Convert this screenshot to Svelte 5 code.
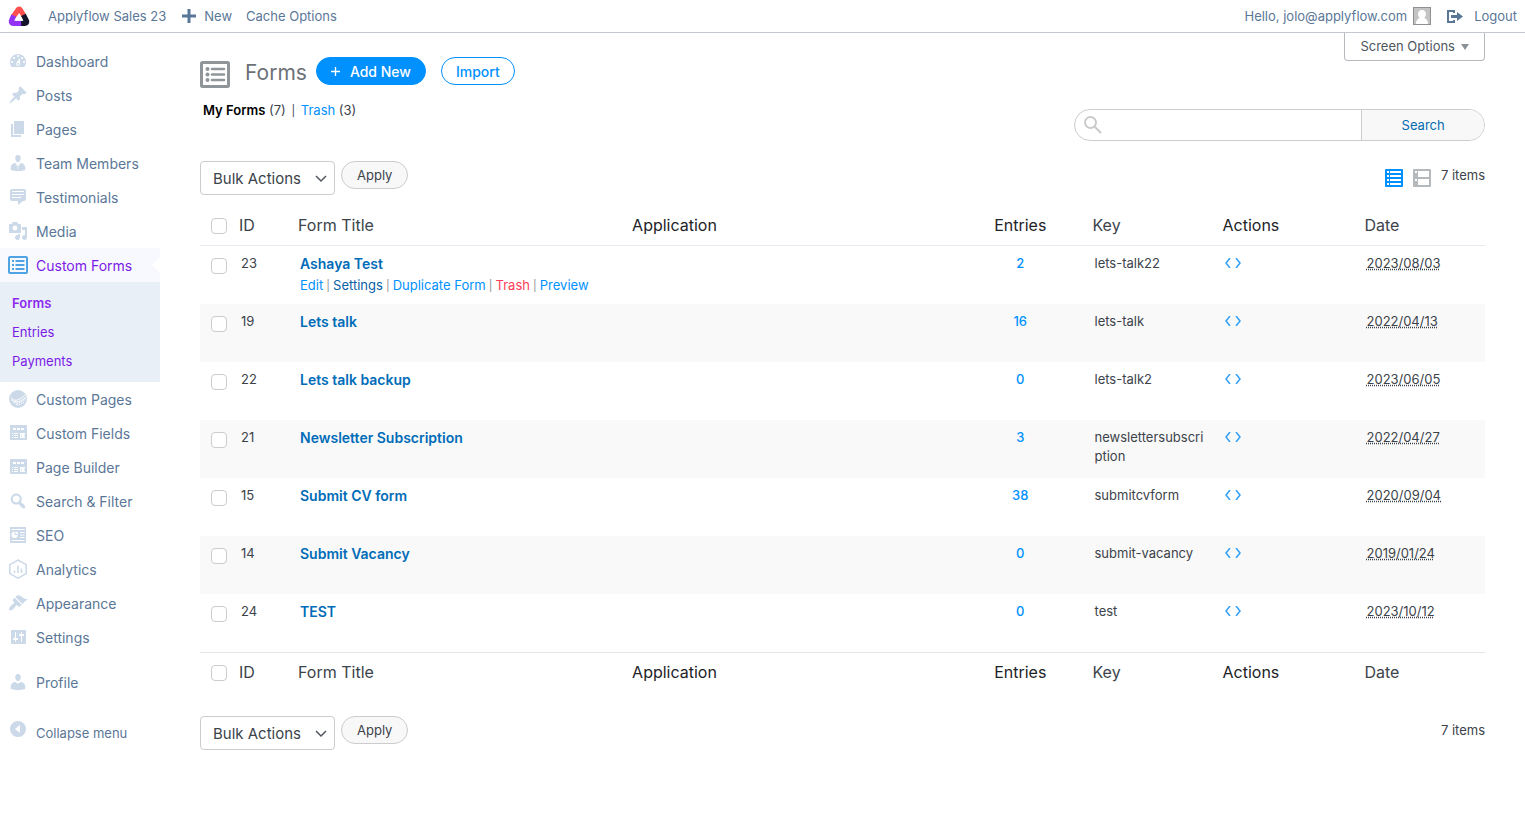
<script lang="ts">
	type MenuItem = { label: string; icon: string; children?: string[]; gap?: boolean };

	const user =
		'<path d="M10 9.25c-2.27 0-2.73-3.44-2.73-3.44C7 4.02 7.82 2 9.97 2c2.16 0 2.98 2.02 2.71 3.81 0 0-.41 3.44-2.68 3.44zm0 2.57L12.72 10c2.39 0 4.52 2.33 4.52 4.53v2.49s-3.65 1.13-7.24 1.13c-3.65 0-7.24-1.13-7.24-1.13v-2.49c0-2.25 1.94-4.48 4.47-4.48z"/>';
	const widgets =
		'<path fill-rule="evenodd" d="M19 16V3c0-.55-.45-1-1-1H3c-.55 0-1 .45-1 1v13c0 .55.45 1 1 1h15c.55 0 1-.45 1-1zM5 5v2h3V5zM9 5v2h3V5zM13 5v2h3V5zM4 10v1h1v-1zM6 10v1h4v-1zM12 10v5h5v-5zM4 12v1h1v-1zM6 12v1h4v-1zM4 14v1h1v-1zM6 14v1h4v-1z"/><path d="M13 11h1v3h-1zM16 11h1v3h-1z" opacity=".5"/>';

	const icons: Record<string, string> = {
		dashboard:
			'<path fill-rule="evenodd" d="M3.76 16h12.48c1.1-1.37 1.76-3.11 1.76-5 0-4.42-3.58-8-8-8s-8 3.58-8 8c0 1.89.66 3.63 1.76 5zM10 4c.55 0 1 .45 1 1s-.45 1-1 1-1-.45-1-1 .45-1 1-1zM6 6c.55 0 1 .45 1 1s-.45 1-1 1-1-.45-1-1 .45-1 1-1zm8 0c.55 0 1 .45 1 1s-.45 1-1 1-1-.45-1-1 .45-1 1-1zm-5.37 5.55L12 7v6c0 1.1-.9 2-2 2s-2-.9-2-2c0-.57.24-1.08.63-1.45zM4 10c.55 0 1 .45 1 1s-.45 1-1 1-1-.45-1-1 .45-1 1-1zm12 0c.55 0 1 .45 1 1s-.45 1-1 1-1-.45-1-1 .45-1 1-1zm-5 3c0-.55-.45-1-1-1s-1 .45-1 1 .45 1 1 1 1-.45 1-1z"/>',
		post: '<path d="M10.44 3.02l1.82-1.82 6.36 6.35-1.83 1.82c-1.05-.68-2.48-.57-3.41.36l-.75.75c-.92.93-1.04 2.35-.35 3.41l-1.83 1.82-2.41-2.41-2.8 2.79c-.42.42-3.38 2.71-3.8 2.29s1.86-3.39 2.28-3.81l2.79-2.79L4.1 9.36l1.83-1.82c1.05.69 2.48.57 3.4-.36l.75-.75c.93-.92 1.05-2.35.36-3.41z"/>',
		page: '<path d="M6 15V2h10v13H6zm-1 1h8v2H3V5h2v11z"/>',
		team: user + '<path fill="#fff" d="M8 10.6l2 1.2 2-1.2.5.8-1.5 1.2v3.9l-1 1-1-1v-3.9l-1.5-1.2z" opacity=".9"/><path d="M9.500 12.500h1l.3 4-.8.8-.8-.8z"/>',
		testimonial:
			'<path fill-rule="evenodd" d="M4 2h12c1.1 0 2 .9 2 2v8c0 1.1-.9 2-2 2h-1l-5 4v-4H4c-1.1 0-2-.9-2-2V4c0-1.1.9-2 2-2zm12 2H4v1h12V4zm0 3H4v1h12V7zm-3 3H4v1h9v-1z"/>',
		media: '<path fill-rule="evenodd" d="M13 11V4c0-.55-.45-1-1-1h-1.67L9 1H5L3.67 3H2c-.55 0-1 .45-1 1v7c0 .55.45 1 1 1h10c.55 0 1-.45 1-1zM7 4.5c1.38 0 2.5 1.12 2.5 2.5S8.38 9.5 7 9.5 4.5 8.38 4.5 7 5.62 4.5 7 4.5zM14 6h5v10.5c0 1.38-1.12 2.5-2.5 2.5S14 17.88 14 16.5s1.12-2.5 2.5-2.5c.17 0 .34.02.5.05V9h-3V6zm-4 8.05V13h2v3.5c0 1.38-1.12 2.5-2.5 2.5S7 17.88 7 16.5 8.12 14 9.5 14c.17 0 .34.02.5.05z"/>',
		pods: '<circle cx="10" cy="10" r="9"/><g fill="none" stroke="#fff"><path d="M2.500 8.500c3 4 8 4 14.500-2.500M3.500 11c4 3 9 2.500 14.500-3"/><path stroke-dasharray="1.5 1" d="M6 13.500c4 1.500 8 0 12-4M8 15.500c3 .5 6-.5 9-3"/></g>',
		widgets,
		search:
			'<path fill-rule="evenodd" d="M12.14 4.18c1.87 1.87 2.11 4.75.72 6.89.12.1.22.21.36.31.2.16.47.36.81.59.34.24.56.39.66.47.42.31.73.57.94.78.32.32.6.65.84 1 .25.35.44.69.59 1.04.14.35.21.68.18 1-.02.32-.14.59-.36.81s-.49.34-.81.36c-.31.02-.65-.04-.99-.19-.35-.14-.7-.34-1.04-.59-.35-.24-.68-.52-1-.84-.21-.21-.47-.52-.77-.93-.1-.13-.25-.35-.47-.66-.22-.32-.4-.57-.56-.78-.16-.2-.29-.35-.44-.5-2.07 1.09-4.69.76-6.44-.98-2.14-2.15-2.14-5.64 0-7.78 2.15-2.15 5.63-2.15 7.78 0zm-1.41 6.36c1.36-1.37 1.36-3.58 0-4.95-1.37-1.37-3.59-1.37-4.95 0-1.37 1.37-1.37 3.58 0 4.95 1.36 1.37 3.58 1.37 4.95 0z"/>',
		seo: '<path d="M2 2h16v16H2z"/><g fill="none" stroke="#fff"><path d="M3.500 4.500h13M12 7.500h4.500M12 10h4.500M12 12.500h4.500M3.500 15.500h13"/></g><path fill="#fff" d="M6.500 6.500v3.500h3.500a3.300 3.300 0 1 1-3.500-3.500z"/><path fill="#fff" d="M7.500 6.200a3 3 0 0 1 2.800 2.800H7.500z"/>',
		analytics:
			'<g fill="none" stroke="currentColor" stroke-width="1.5"><path d="M10 1l8.200 4.600v9L10 19.200 1.800 14.600v-9z"/><path d="M6.500 11.500v2.500M10 6.500V14M13.500 9.500V14"/></g>',
		appearance:
			'<path d="M14.48 11.06L7.41 3.99l1.5-1.5c.5-.56 2.3-.47 3.51.32 1.21.8 1.43 1.28 2.91 2.1 1.18.64 2.45 1.26 4.45.85zm-.71.71L6.7 4.7 4.93 6.47c-.39.39-.39 1.02 0 1.41l1.06 1.06c.39.39.39 1.03 0 1.42-.6.6-1.43 1.11-2.21 1.69-.35.26-.7.53-1.01.84C1.43 14.23.4 16.08 1.4 17.07c.99 1 2.84-.03 4.18-1.36.31-.31.58-.66.85-1.02.57-.78 1.08-1.61 1.69-2.21.39-.39 1.02-.39 1.41 0l1.06 1.06c.39.39 1.02.39 1.41 0z"/>',
		settings:
			'<path fill-rule="evenodd" d="M18 16V4c0-.55-.45-1-1-1H4c-.55 0-1 .45-1 1v12c0 .55.45 1 1 1h13c.55 0 1-.45 1-1zM8 11h1c.55 0 1 .45 1 1s-.45 1-1 1H8v1.5c0 .28-.22.5-.5.5s-.5-.22-.5-.5V13H6c-.55 0-1-.45-1-1s.45-1 1-1h1V5.5c0-.28.22-.5.5-.5s.5.22.5.5V11zm5-2h-1c-.55 0-1-.45-1-1s.45-1 1-1h1V5.5c0-.28.22-.5.5-.5s.5.22.5.5V7h1c.55 0 1 .45 1 1s-.45 1-1 1h-1v5.5c0 .28-.22.5-.5.5s-.5-.22-.5-.5V9z"/>',
		user,
		forms:
			'<rect x="1" y="2" width="18" height="16" rx="1" fill="none" stroke="currentColor" stroke-width="2"/><path d="M4 5h2v2H4zM4 9h2v2H4zM4 13h2v2H4zM7.500 5h9v2h-9zM7.500 9h9v2h-9zM7.500 13h9v2h-9z"/>',
		collapse: '<path fill-rule="evenodd" d="M10 2a8 8 0 1 1 0 16 8 8 0 0 1 0-16zm2 4l-5 4 5 4z"/>'
	};

	const menu: MenuItem[] = [
		{ label: 'Dashboard', icon: 'dashboard' },
		{ label: 'Posts', icon: 'post' },
		{ label: 'Pages', icon: 'page' },
		{ label: 'Team Members', icon: 'team' },
		{ label: 'Testimonials', icon: 'testimonial' },
		{ label: 'Media', icon: 'media' },
		{ label: 'Custom Forms', icon: 'forms', children: ['Forms', 'Entries', 'Payments'] },
		{ label: 'Custom Pages', icon: 'pods' },
		{ label: 'Custom Fields', icon: 'widgets' },
		{ label: 'Page Builder', icon: 'widgets' },
		{ label: 'Search & Filter', icon: 'search' },
		{ label: 'SEO', icon: 'seo' },
		{ label: 'Analytics', icon: 'analytics' },
		{ label: 'Appearance', icon: 'appearance' },
		{ label: 'Settings', icon: 'settings' },
		{ label: 'Profile', icon: 'user', gap: true }
	];

	const forms = [
		{ id: 23, title: 'Ashaya Test', entries: 2, key: 'lets-talk22', date: '2023/08/03' },
		{ id: 19, title: 'Lets talk', entries: 16, key: 'lets-talk', date: '2022/04/13' },
		{ id: 22, title: 'Lets talk backup', entries: 0, key: 'lets-talk2', date: '2023/06/05' },
		{ id: 21, title: 'Newsletter Subscription', entries: 3, key: 'newslettersubscription', date: '2022/04/27' },
		{ id: 15, title: 'Submit CV form', entries: 38, key: 'submitcvform', date: '2020/09/04' },
		{ id: 14, title: 'Submit Vacancy', entries: 0, key: 'submit-vacancy', date: '2019/01/24' },
		{ id: 24, title: 'TEST', entries: 0, key: 'test', date: '2023/10/12' }
	];

	let selected: number[] = $state([]);
	let query = $state('');
	const allSelected = $derived(selected.length === forms.length);

	function toggleAll() {
		selected = allSelected ? [] : forms.map((f) => f.id);
	}
</script>

{#snippet icon(name: string)}
	<svg class="icon" viewBox="0 0 20 20" fill="currentColor" aria-hidden="true">{@html icons[name]}</svg>
{/snippet}

{#snippet columns()}
	<tr>
		<td class="check">
			<input type="checkbox" aria-label="Select all" checked={allSelected} onchange={toggleAll} />
		</td>
		<th scope="col"><a href="#id">ID</a></th>
		<th scope="col"><a href="#title">Form Title</a></th>
		<th scope="col">Application</th>
		<th scope="col" class="num">Entries</th>
		<th scope="col"><a href="#key">Key</a></th>
		<th scope="col">Actions</th>
		<th scope="col"><a href="#date">Date</a></th>
	</tr>
{/snippet}

{#snippet bulk(id: string)}
	<div class="bulk">
		<div class="select">
			<select {id} aria-label="Select bulk action">
				<option>Bulk Actions</option>
				<option>Move to Trash</option>
			</select>
			<svg viewBox="0 0 12 8" aria-hidden="true"><path d="M1 1l5 5 5-5" /></svg>
		</div>
		<button class="apply" type="button">Apply</button>
	</div>
{/snippet}

<header class="bar">
	<a class="logo" href="#home" aria-label="Applyflow">
		<svg viewBox="0 0 20 19" aria-hidden="true">
			<g fill="none" stroke-width="5" stroke-linejoin="round" stroke-linecap="round">
				<path stroke="#ff4f4f" d="M5 9.500L9.500 3.200Q10.200 2.700 11 3.500L14 8.500" />
				<path stroke="#14142b" stroke-linecap="butt" d="M14.200 8.500L17.200 14.500Q17.500 16.500 15.500 16.500L10.500 16.500" />
				<path stroke="#9333f5" stroke-linecap="butt" d="M5 9L2.800 14Q2.500 16.500 5 16.500L12 16.500" />
			</g>
			<path fill="#fff" d="M10.500 7l3.300 7H6.500z" />
		</svg>
	</a>
	<a class="site" href="#site">Applyflow Sales 23</a>
	<a class="new" href="#new">
		<svg viewBox="0 0 14 14" aria-hidden="true"><path d="M7 0v14M0 7h14" stroke="currentColor" stroke-width="3" /></svg>
		New
	</a>
	<a href="#cache">Cache Options</a>
	<a class="account" href="#profile">
		Hello, jolo@applyflow.com
		<svg viewBox="0 0 18 18" aria-hidden="true">
			<rect x=".5" y=".5" width="17" height="17" fill="#c4c4c4" stroke="#8c8f94" />
			<path fill="#fff" d="M9 3c2.500 0 4 1.700 4 4 0 1.600-.7 2.800-1.600 3.600.2 1.300 3.600 1.400 3.600 6.400H3c0-5 3.400-5.100 3.600-6.400C5.700 9.800 5 8.600 5 7c0-2.300 1.500-4 4-4z" />
		</svg>
	</a>
	<a class="logout" href="#logout">
		<svg viewBox="0 0 16 13" fill="currentColor" aria-hidden="true">
			<path d="M0 0h8v3H6V2H2v9h4v-1h2v3H0z" /><path d="M4 5h6V2l6 4.500L10 11V8H4z" />
		</svg>
		Logout
	</a>
</header>

<div class="shell">
	<nav aria-label="Main menu">
		<ul class="menu">
			{#each menu as item}
				<li class:gap={item.gap} class:current={item.children}>
					<a class="item" href="#{item.label}">{@render icon(item.icon)}{item.label}</a>
					{#if item.children}
						<ul class="sub">
							{#each item.children as child, i}
								<li><a class:active={i === 0} href="#{child}">{child}</a></li>
							{/each}
						</ul>
					{/if}
				</li>
			{/each}
		</ul>
		<button class="collapse" type="button">{@render icon('collapse')}<span>Collapse menu</span></button>
	</nav>

	<main>
		<button class="screen-options" type="button">Screen Options <i></i></button>

		<div class="heading">
			<svg class="forms-icon" viewBox="0 0 30 27" fill="currentColor" aria-hidden="true">
				<rect x="1.500" y="1.500" width="27" height="24" rx="1" fill="none" stroke="currentColor" stroke-width="3" />
				<circle cx="7.500" cy="8" r="2" /><circle cx="7.500" cy="13.500" r="2" /><circle cx="7.500" cy="19" r="2" />
				<path d="M12 8h12M12 13.500h12M12 19h12" stroke="currentColor" stroke-width="2.500" stroke-linecap="round" />
			</svg>
			<h1>Forms</h1>
			<a class="pill primary" href="#add">
				<svg viewBox="0 0 10 10" aria-hidden="true"><path d="M5 0v10M0 5h10" stroke="currentColor" stroke-width="1.500" /></svg>
				Add New
			</a>
			<a class="pill" href="#import">Import</a>
		</div>

		<div class="filters">
			<p><a class="mine" href="#all">My Forms</a> (7) <span>|</span> <a href="#trash">Trash</a> (3)</p>
			<form class="search" onsubmit={(e) => e.preventDefault()}>
				<svg viewBox="0 0 18 18" aria-hidden="true">
					<circle cx="6.500" cy="6.500" r="5.500" /><path d="M10.500 10.500l6.500 6.500" />
				</svg>
				<input type="search" aria-label="Search forms" bind:value={query} />
				<button type="submit">Search</button>
			</form>
		</div>

		<div class="tablenav">
			{@render bulk('bulk-top')}
			<div class="views">
				<a class="on" href="#list" aria-label="List view">
					<svg viewBox="0 0 18 18" aria-hidden="true">
						<rect width="18" height="18" rx="1" fill="currentColor" />
						<path fill="#fff" d="M2 2h2v2H2zM2 6h2v2H2zM2 10h2v2H2zM2 14h2v2H2zM5 2h11v2H5zM5 6h11v2H5zM5 10h11v2H5zM5 14h11v2H5z" />
					</svg>
				</a>
				<a href="#excerpt" aria-label="Excerpt view">
					<svg viewBox="0 0 18 18" aria-hidden="true">
						<rect width="18" height="18" rx="1" fill="currentColor" />
						<path fill="#fff" d="M2 2h2v2H2zM2 10h2v2H2zM5 2h11v6H5zM5 10h11v6H5z" />
					</svg>
				</a>
				<span>7 items</span>
			</div>
		</div>

		<table>
			<colgroup>
				<col class="c-check" /><col class="c-id" /><col class="c-title" /><col /><col class="c-entries" />
				<col class="c-key" /><col class="c-actions" /><col class="c-date" />
			</colgroup>
			<thead>{@render columns()}</thead>
			<tbody>
				{#each forms as form, i}
					<tr>
						<td class="check">
							<input type="checkbox" aria-label="Select {form.title}" value={form.id} bind:group={selected} />
						</td>
						<td>{form.id}</td>
						<td>
							<a class="title" href="#form-{form.id}">{form.title}</a>
							{#if i === 0}
								<div class="row-actions">
									<a href="#edit">Edit</a> | <a class="dark" href="#settings">Settings</a> |
									<a href="#duplicate">Duplicate Form</a> | <a class="danger" href="#trash">Trash</a> |
									<a href="#preview">Preview</a>
								</div>
							{/if}
						</td>
						<td></td>
						<td class="num"><a href="#entries-{form.id}">{form.entries}</a></td>
						<td class="key">{form.key}</td>
						<td>
							<a class="code" href="#code-{form.id}" aria-label="Show code">
								<svg viewBox="0 0 16 10" aria-hidden="true"><path d="M5 0L1 5l4 5M11 0l4 5-4 5" /></svg>
							</a>
						</td>
						<td><abbr title={form.date}>{form.date}</abbr></td>
					</tr>
				{/each}
			</tbody>
			<tfoot>{@render columns()}</tfoot>
		</table>

		<div class="tablenav bottom">
			{@render bulk('bulk-bottom')}
			<div class="views"><span>7 items</span></div>
		</div>
	</main>
</div>

<style>
	:global(body) {
		margin: 0;
		background: #fff;
		color: #3c434a;
		font: 13px/19px Inter, 'Liberation Sans', sans-serif;
	}

	a {
		color: #0091ff;
		text-decoration: none;
	}

	ul {
		list-style: none;
		margin: 0;
		padding: 0;
	}

	button,
	input,
	select {
		font: inherit;
		margin: 0;
		box-sizing: border-box;
	}

	button {
		cursor: pointer;
	}

	svg {
		display: block;
		flex: none;
	}

	/* top bar */
	.bar {
		display: flex;
		align-items: center;
		height: 32px;
		padding: 0 8px;
		border-bottom: 1px solid #c3c8cf;
	}

	.bar a {
		display: flex;
		align-items: center;
		color: #5b7798;
	}

	.logo svg {
		width: 22px;
		height: 20px;
	}

	.bar .site {
		margin: 0 16px 0 18px;
	}

	.bar .new {
		gap: 8px;
		margin-right: 14px;
	}

	.new svg {
		width: 14px;
		height: 14px;
	}

	.bar .account {
		gap: 6px;
		margin-left: auto;
	}

	.account svg {
		width: 18px;
		height: 18px;
	}

	.bar .logout {
		gap: 11px;
		margin-left: 16px;
	}

	.logout svg {
		width: 16px;
		height: 13px;
	}

	.shell {
		display: flex;
	}

	/* side menu */
	nav {
		flex: 0 0 160px;
		padding-top: 11px;
	}

	.item {
		display: flex;
		align-items: center;
		gap: 8px;
		height: 34px;
		padding-left: 8px;
		color: #5b7798;
		font-size: 14px;
	}

	.icon {
		width: 20px;
		height: 20px;
		color: #cbd9e9;
	}

	.gap {
		margin-top: 11px;
	}

	.current .item {
		position: relative;
		background: #f8f9fe;
		color: #7b1be6;
	}

	.current .item::after {
		content: '';
		position: absolute;
		right: 0;
		border: 8px solid transparent;
		border-right-color: #fff;
		border-left-width: 0;
	}

	.current .icon {
		color: #4fa3e3;
	}

	.sub {
		padding: 7px 0 6px;
		background: #e8eff7;
	}

	.sub a {
		display: block;
		padding: 5px 12px;
		color: #7b1be6;
	}

	.sub .active {
		font-weight: 600;
		color: #8c2af0;
	}

	.collapse {
		display: flex;
		align-items: flex-start;
		gap: 8px;
		margin-top: 20px;
		padding: 0 8px;
		border: 0;
		background: none;
		color: #5b7798;
	}

	.collapse span {
		padding-top: 5px;
	}

	/* content */
	main {
		position: relative;
		flex: 1;
		min-width: 0;
		padding: 24px 40px;
	}

	.screen-options {
		position: absolute;
		top: 0;
		right: 40px;
		display: flex;
		align-items: center;
		gap: 6px;
		height: 28px;
		padding: 0 15px;
		border: 1px solid #b5b9be;
		border-top: 0;
		border-radius: 0 0 4px 4px;
		background: #fff;
		color: #50575e;
	}

	.screen-options i {
		border: 4px solid transparent;
		border-top: 6px solid #8c9196;
		border-bottom: 0;
	}

	.heading {
		display: flex;
		align-items: flex-start;
		height: 32px;
	}

	.forms-icon {
		width: 30px;
		height: 27px;
		margin-top: 4px;
		color: #8f9599;
	}

	h1 {
		margin: 0 9px 0 15px;
		font-size: 21px;
		font-weight: 400;
		line-height: 32px;
		color: #6c7177;
	}

	.pill {
		display: flex;
		align-items: center;
		gap: 10px;
		box-sizing: border-box;
		height: 28px;
		margin-right: 15px;
		padding: 0 14px;
		border: 1px solid #0091ff;
		border-radius: 14px;
		font-size: 14px;
		font-weight: 500;
	}

	.pill.primary {
		background: #0091ff;
		color: #fff;
	}

	.pill svg {
		width: 9px;
		height: 9px;
	}

	.filters {
		display: flex;
		justify-content: space-between;
		align-items: flex-start;
		margin-top: 12px;
	}

	.filters p {
		margin: 0 3px;
	}

	.filters p span {
		margin: 0 2px;
		font-size: 11px;
	}

	.mine {
		color: #000;
		font-weight: 600;
	}

	.search {
		display: flex;
		align-items: center;
		box-sizing: border-box;
		width: 32%;
		height: 32px;
		margin-top: 8px;
		border: 1px solid #ccc;
		border-radius: 16px;
		overflow: hidden;
	}

	.search svg {
		width: 18px;
		height: 18px;
		margin-left: 9px;
		fill: none;
		stroke: #c8cacc;
		stroke-width: 2;
	}

	.search input {
		flex: 1;
		min-width: 0;
		height: 100%;
		border: 0;
		background: none;
		outline: none;
	}

	.search button {
		flex: 0 0 30%;
		height: 100%;
		border: 0;
		border-left: 1px solid #ccc;
		background: #f8f8f8;
		color: #006cb0;
	}

	.tablenav {
		display: flex;
		justify-content: space-between;
		align-items: flex-start;
		margin: 20px 0 11px;
	}

	.tablenav.bottom {
		margin: 24px 0 0;
	}

	.bulk {
		display: flex;
		align-items: flex-start;
		gap: 6px;
	}

	.select {
		position: relative;
	}

	select {
		appearance: none;
		width: 135px;
		height: 34px;
		padding: 0 12px;
		border: 1px solid #ccc;
		border-radius: 4px;
		background: #fff;
		color: #3c434a;
		font-size: 15px;
	}

	.select svg {
		position: absolute;
		top: 14px;
		right: 8px;
		width: 12px;
		height: 8px;
		fill: none;
		stroke: #50575e;
		stroke-width: 1.5;
		pointer-events: none;
	}

	.apply {
		height: 28px;
		padding: 0 15px;
		border: 1px solid #ccc;
		border-radius: 14px;
		background: #f8f8f8;
		color: #3c434a;
	}

	.views {
		display: flex;
		gap: 10px;
		line-height: 28px;
	}

	.views a {
		margin-top: 8px;
		color: #b4b9be;
	}

	.views .on {
		color: #0091ff;
	}

	.views svg {
		width: 18px;
		height: 18px;
	}

	/* table */
	table {
		width: 100%;
		table-layout: fixed;
		border-collapse: separate;
		border-spacing: 0;
	}

	.c-check {
		width: 31px;
	}

	.c-id {
		width: 59px;
	}

	.c-title {
		width: 26%;
	}

	.c-entries,
	.c-date {
		width: 10%;
	}

	.c-key {
		width: 130px;
	}

	.c-actions {
		width: 142px;
	}

	th {
		padding: 8px;
		font-size: 16px;
		font-weight: 400;
		line-height: 23px;
		text-align: left;
		color: #1d2327;
	}

	th a {
		color: #3c434a;
	}

	td {
		padding: 8px 10px;
		height: 42px;
		vertical-align: top;
	}

	thead td,
	tfoot td {
		height: 23px;
	}

	thead th,
	thead td {
		border-bottom: 1px solid #e6eaf3;
	}

	tfoot th,
	tfoot td {
		border-top: 1px solid #e2e6ea;
	}

	tbody tr:nth-child(even) {
		background: #f9f9f9;
	}

	td.check {
		padding: 12px 0 0 11px;
	}

	td input {
		display: block;
		appearance: none;
		width: 16px;
		height: 16px;
		border: 1px solid #ccc;
		border-radius: 4px;
		background: #fff;
	}

	td input:checked {
		background: #0091ff;
	}

	.num {
		text-align: center;
	}

	td.num {
		font-weight: 500;
	}

	.title {
		color: #006cb8;
		font-size: 14px;
		font-weight: 600;
		line-height: 20px;
	}

	.row-actions {
		padding-top: 2px;
		font-size: 11px;
		white-space: nowrap;
		color: #8c8f94;
	}

	.row-actions a {
		font-size: 13px;
	}

	.row-actions .dark {
		color: #0a5fa5;
	}

	.row-actions .danger {
		color: #ff3b55;
	}

	.key {
		overflow-wrap: break-word;
	}

	.code {
		display: inline-block;
		padding-top: 4px;
	}

	.code svg {
		width: 16px;
		height: 10px;
		fill: none;
		stroke: #2f9ff5;
		stroke-width: 1.5;
	}

	abbr {
		text-decoration: underline dotted;
	}
</style>
